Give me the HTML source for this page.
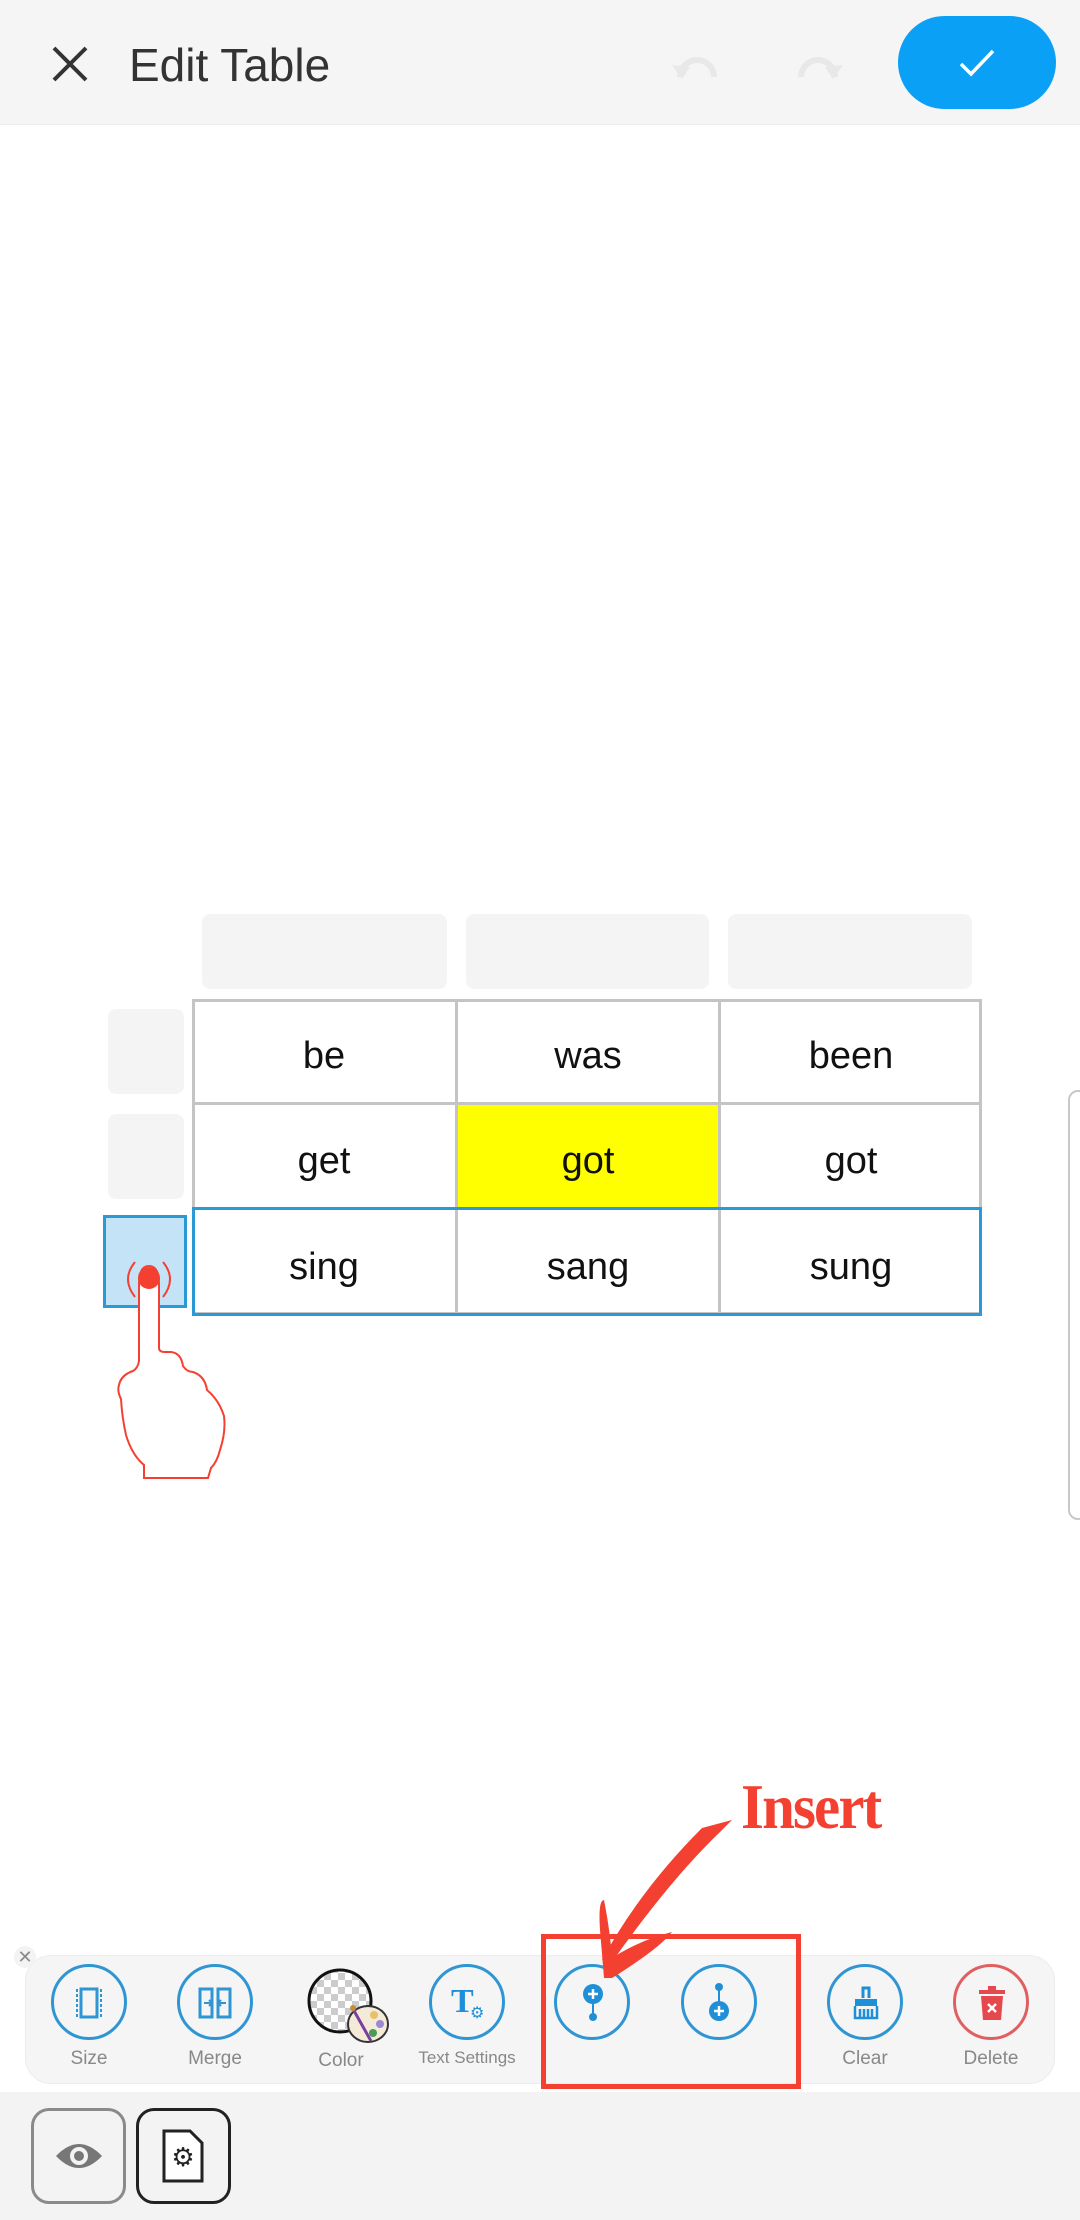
<!DOCTYPE html>
<html><head><meta charset="utf-8"><style>
*{margin:0;padding:0;box-sizing:border-box}
body{width:1080px;height:2220px;background:#fff;position:relative;overflow:hidden;font-family:"Liberation Sans",sans-serif}
.a{position:absolute}
.hdr{left:0;top:0;width:1080px;height:125px;background:#f5f5f5;border-bottom:1px solid #ececec}
.ph{background:#f4f4f4;border-radius:8px}
.cell{position:absolute;display:flex;align-items:center;justify-content:center;font-size:38px;color:#111;padding-top:10px}
.ic{position:absolute;width:76px;height:76px;border:3px solid #2f95d3;border-radius:50%;top:1964px}
.lb{position:absolute;top:2048px;font-size:19px;color:#888;width:140px;text-align:center}
</style></head><body>
<div class="a hdr"></div>
<svg class="a" style="left:50px;top:44px" width="40" height="40" viewBox="0 0 40 40"><path d="M4 4L36 36M36 4L4 36" stroke="#333" stroke-width="4"/></svg>
<div class="a" style="left:129px;top:38px;font-size:46px;color:#333">Edit Table</div>
<svg class="a" style="left:670px;top:45px" width="60" height="40" viewBox="0 0 60 40"><path d="M10 32 A16 16 0 1 1 44 32" fill="none" stroke="#e8e8e8" stroke-width="6"/><path d="M2 20l10 14 8-12z" fill="#e8e8e8"/></svg>
<svg class="a" style="left:785px;top:45px" width="60" height="40" viewBox="0 0 60 40"><path d="M16 32 A16 16 0 1 1 50 32" fill="none" stroke="#e8e8e8" stroke-width="6"/><path d="M58 20l-10 14-8-12z" fill="#e8e8e8"/></svg>
<div class="a" style="left:898px;top:16px;width:158px;height:93px;border-radius:47px;background:#0aa0f5"></div>
<svg class="a" style="left:957px;top:48px" width="40" height="30" viewBox="0 0 40 30"><path d="M4 16l10 10L36 3" fill="none" stroke="#fff" stroke-width="3.5"/></svg>

<div class="a ph" style="left:202px;top:914px;width:245px;height:75px"></div>
<div class="a ph" style="left:466px;top:914px;width:243px;height:75px"></div>
<div class="a ph" style="left:728px;top:914px;width:244px;height:75px"></div>
<div class="a ph" style="left:108px;top:1009px;width:76px;height:85px"></div>
<div class="a ph" style="left:108px;top:1114px;width:76px;height:85px"></div>
<div class="a" style="left:103px;top:1215px;width:84px;height:93px;background:#c5e3f7;border:3px solid #2a9ad6"></div>

<div class="a" style="left:192px;top:999px;width:790px;height:316px;border:3px solid #c4c4c4"></div>
<div class="a" style="left:455px;top:999px;width:3px;height:316px;background:#c4c4c4"></div>
<div class="a" style="left:718px;top:999px;width:3px;height:316px;background:#c4c4c4"></div>
<div class="a" style="left:192px;top:1102px;width:790px;height:3px;background:#c4c4c4"></div>
<div class="a" style="left:458px;top:1105px;width:260px;height:103px;background:#ffff00"></div>
<div class="a" style="left:192px;top:1207px;width:790px;height:109px;border:3px solid #2a9ad6"></div>

<div class="cell" style="left:192px;top:999px;width:264px;height:105px">be</div>
<div class="cell" style="left:456px;top:999px;width:264px;height:105px">was</div>
<div class="cell" style="left:719px;top:999px;width:264px;height:105px">been</div>
<div class="cell" style="left:192px;top:1104px;width:264px;height:105px">get</div>
<div class="cell" style="left:456px;top:1104px;width:264px;height:105px">got</div>
<div class="cell" style="left:719px;top:1104px;width:264px;height:105px">got</div>
<div class="cell" style="left:192px;top:1209px;width:264px;height:106px">sing</div>
<div class="cell" style="left:456px;top:1209px;width:264px;height:106px">sang</div>
<div class="cell" style="left:719px;top:1209px;width:264px;height:106px">sung</div>

<svg class="a" style="left:100px;top:1200px" width="140" height="300" viewBox="100 1200 140 300">
<path d="M135 1262 q-14 17 0 35 M163 1262 q14 17 0 35" fill="none" stroke="#f44031" stroke-width="2"/>
<path d="M139 1284 q0 -18 10 -18 q10 0 10 18 L159 1348 q0 4 6 4 l6 0 q10 1 12 14 q4 6 10 6 q12 4 14 18 q12 10 17 26 q2 16 -4 34 q-3 12 -9 18 L208 1478 L144 1478 L144 1465 q-12 -10 -18 -30 q-4 -18 -5 -36 q-4 -8 -2 -14 q2 -10 14 -14 q5 -3 6 -10 Z" fill="#fff" stroke="#f44031" stroke-width="2"/>
<circle cx="149" cy="1278" r="11" fill="#f44031"/>
</svg>

<div class="a" style="left:1068px;top:1090px;width:20px;height:430px;border:2px solid #c8c8c8;border-radius:14px;background:#fff"></div>

<div class="a" style="left:741px;top:1770px;font-family:'Liberation Serif',serif;font-size:64px;font-weight:bold;color:#f44031;letter-spacing:-2px;transform:scaleX(0.92);transform-origin:left">Insert</div>

<div class="a" style="left:25px;top:1955px;width:1030px;height:129px;background:#f5f5f5;border:1px solid #ececec;border-radius:26px"></div>
<div class="a" style="left:14px;top:1946px;width:22px;height:22px;border-radius:50%;background:#f3f3f3;color:#888;font-size:18px;line-height:22px;text-align:center">✕</div>

<div class="ic" style="left:51px"></div>
<svg class="a" style="left:75px;top:1987px" width="28" height="32" viewBox="0 0 28 32"><rect x="6" y="2" width="16" height="28" fill="none" stroke="#2f95d3" stroke-width="3"/><path d="M2 2v28M26 2v28" stroke="#2f95d3" stroke-width="2" stroke-dasharray="3 2"/></svg>
<div class="ic" style="left:177px"></div>
<svg class="a" style="left:198px;top:1987px" width="34" height="32" viewBox="0 0 34 32"><rect x="2" y="2" width="12" height="28" fill="none" stroke="#2f95d3" stroke-width="3"/><rect x="20" y="2" width="12" height="28" fill="none" stroke="#2f95d3" stroke-width="3"/><path d="M6 16h8M28 16h-8M11 13l3 3-3 3M23 13l-3 3 3 3" fill="none" stroke="#2f95d3" stroke-width="2"/></svg>
<svg class="a" style="left:303px;top:1966px" width="90" height="82" viewBox="0 0 90 82">
<defs><pattern id="ck" width="14" height="14" patternUnits="userSpaceOnUse"><rect width="14" height="14" fill="#fff"/><rect width="7" height="7" fill="#ccc"/><rect x="7" y="7" width="7" height="7" fill="#ccc"/></pattern></defs>
<circle cx="37" cy="35" r="31" fill="url(#ck)" stroke="#111" stroke-width="3"/>
<ellipse cx="65" cy="58" rx="20" ry="18" fill="#f3ead8" stroke="#333" stroke-width="2"/>
<circle cx="71" cy="49" r="4" fill="#e8c06a"/><circle cx="77" cy="58" r="4" fill="#9a8ad6"/><circle cx="70" cy="67" r="4" fill="#4a9a58"/>
<path d="M50 43l18 32" stroke="#7b3fa0" stroke-width="3"/><circle cx="50" cy="42" r="3" fill="#c98a3a"/>
</svg>
<div class="ic" style="left:429px"></div>
<div class="a" style="left:451px;top:1983px;font-family:'Liberation Serif',serif;font-weight:bold;font-size:34px;color:#1f8fd8">T</div>
<div class="a" style="left:470px;top:2003px;font-size:16px;color:#1f8fd8">⚙</div>
<div class="ic" style="left:554px"></div>
<svg class="a" style="left:575px;top:1982px" width="36" height="44" viewBox="0 0 36 44"><circle cx="18" cy="12" r="10" fill="#1f8fd8"/><path d="M18 7v10M13 12h10" stroke="#fff" stroke-width="2.5"/><path d="M18 22v12" stroke="#1f8fd8" stroke-width="2"/><circle cx="18" cy="35" r="4" fill="#1f8fd8"/></svg>
<div class="ic" style="left:681px"></div>
<svg class="a" style="left:701px;top:1980px" width="36" height="44" viewBox="0 0 36 44"><circle cx="18" cy="7" r="4" fill="#1f8fd8"/><path d="M18 10v12" stroke="#1f8fd8" stroke-width="2"/><circle cx="18" cy="31" r="10" fill="#1f8fd8"/><path d="M18 26v10M13 31h10" stroke="#fff" stroke-width="2.5"/></svg>
<div class="ic" style="left:827px"></div>
<svg class="a" style="left:850px;top:1984px" width="32" height="38" viewBox="0 0 32 38"><path d="M13 14V4h6v10" fill="none" stroke="#1f8fd8" stroke-width="3"/><rect x="5" y="15" width="22" height="7" fill="#1f8fd8"/><path d="M5 22v12h22V22M10 25v9M14 25v9M18 25v9M22 25v9" fill="none" stroke="#1f8fd8" stroke-width="2.5"/></svg>
<div class="ic" style="left:953px;border-color:#e06062"></div>
<svg class="a" style="left:977px;top:1985px" width="30" height="36" viewBox="0 0 30 36"><rect x="11" y="1" width="8" height="4" fill="#e5484d"/><rect x="2" y="5" width="26" height="4" fill="#e5484d"/><path d="M4 11h22l-2 24H6z" fill="#e5484d"/><path d="M11 19l8 8M19 19l-8 8" stroke="#fff" stroke-width="2.5"/></svg>

<div class="lb" style="left:19px">Size</div>
<div class="lb" style="left:145px">Merge</div>
<div class="lb" style="left:271px;top:2050px">Color</div>
<div class="lb" style="left:397px;font-size:17px">Text Settings</div>
<div class="lb" style="left:795px">Clear</div>
<div class="lb" style="left:921px">Delete</div>

<div class="a" style="left:541px;top:1934px;width:260px;height:155px;border:5px solid #f44031"></div>
<svg class="a" style="left:590px;top:1810px" width="150" height="180" viewBox="590 1810 150 180">
<path d="M732 1820 L720 1832 Q670 1880 612 1962 L602 1960 Q640 1890 702 1828 Z" fill="#f44031"/>
<path d="M600 1930 Q598 1900 604 1900 Q610 1930 612 1958 Q640 1940 672 1932 Q660 1948 612 1978 L604 1978 Z" fill="#f44031"/>
</svg>

<div class="a" style="left:0;top:2092px;width:1080px;height:128px;background:#f3f3f3"></div>
<div class="a" style="left:31px;top:2108px;width:95px;height:96px;border:3px solid #8a8a8a;border-radius:18px"></div>
<svg class="a" style="left:54px;top:2140px" width="50" height="32" viewBox="0 0 50 32"><path d="M2 16Q25-8 48 16Q25 40 2 16Z" fill="#777"/><circle cx="25" cy="16" r="9" fill="#f3f3f3"/><circle cx="25" cy="16" r="5" fill="#777"/></svg>
<div class="a" style="left:136px;top:2108px;width:95px;height:96px;border:3px solid #222;border-radius:18px"></div>
<svg class="a" style="left:161px;top:2128px" width="44" height="56" viewBox="0 0 44 56"><path d="M3 3h26l12 12v38H3z" fill="#fff" stroke="#222" stroke-width="3"/><text x="22" y="38" font-size="26" text-anchor="middle" fill="#222" font-family="DejaVu Sans">⚙</text></svg>
</body></html>
